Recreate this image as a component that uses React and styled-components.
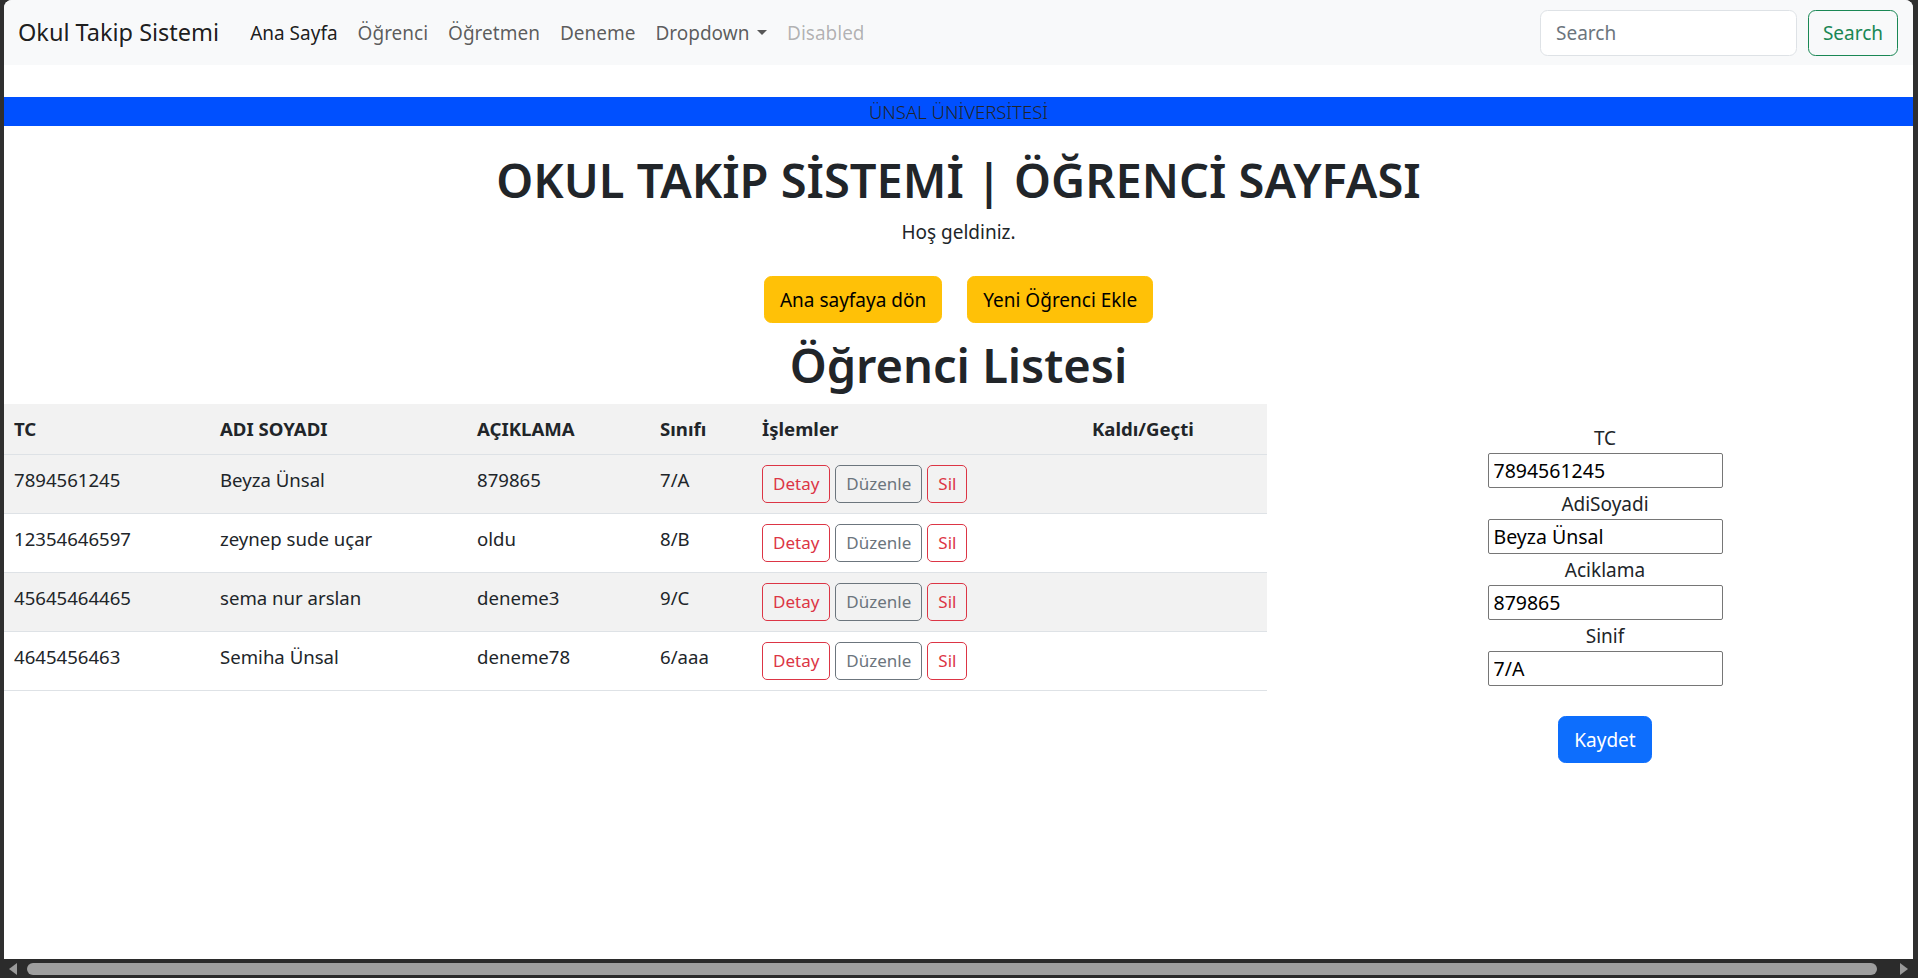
import React from "react";
import styled, { createGlobalStyle } from "styled-components";

const FONT = `"Noto Sans", "Open Sans", sans-serif`;

const GlobalStyle = createGlobalStyle`
  html, body {
    margin: 0;
    padding: 0;
    background: #2f2f2f;
  }
  body {
    font-family: ${FONT};
    color: #212529;
  }
  * {
    box-sizing: border-box;
  }
`;

const students = [
  { tc: "7894561245", name: "Beyza Ünsal", note: "879865", sinif: "7/A" },
  { tc: "12354646597", name: "zeynep sude uçar", note: "oldu", sinif: "8/B" },
  { tc: "45645464465", name: "sema nur arslan", note: "deneme3", sinif: "9/C" },
  { tc: "4645456463", name: "Semiha Ünsal", note: "deneme78", sinif: "6/aaa" },
];

const columns = [
  { title: "TC", width: 206 },
  { title: "ADI SOYADI", width: 257 },
  { title: "AÇIKLAMA", width: 183 },
  { title: "Sınıfı", width: 102 },
  { title: "İşlemler", width: 330 },
  { title: "Kaldı/Geçti", width: 185 },
];

const App = () => {
  const selected = students[0];

  return (
    <>
      <GlobalStyle />
      <Frame>
        <Viewport>
          <Nav>
            <Brand href="#">Okul Takip Sistemi</Brand>
            <NavList>
              <li>
                <NavLink $state="active" href="#">Ana Sayfa</NavLink>
              </li>
              <li>
                <NavLink href="#">Öğrenci</NavLink>
              </li>
              <li>
                <NavLink href="#">Öğretmen</NavLink>
              </li>
              <li>
                <NavLink href="#">Deneme</NavLink>
              </li>
              <li>
                <NavLink href="#">
                  Dropdown
                  <Caret />
                </NavLink>
              </li>
              <li>
                <NavLink $state="disabled">Disabled</NavLink>
              </li>
            </NavList>
            <SearchForm onSubmit={(e) => e.preventDefault()}>
              <SearchInput type="search" placeholder="Search" />
              <SearchButton type="submit">Search</SearchButton>
            </SearchForm>
          </Nav>

          <Banner>ÜNSAL ÜNİVERSİTESİ</Banner>

          <Title>OKUL TAKİP SİSTEMİ | ÖĞRENCİ SAYFASI</Title>
          <Welcome>Hoş geldiniz.</Welcome>
          <ActionRow>
            <WarningButton>Ana sayfaya dön</WarningButton>
            <WarningButton>Yeni Öğrenci Ekle</WarningButton>
          </ActionRow>
          <SubTitle>Öğrenci Listesi</SubTitle>

          <Content>
            <Table>
              <colgroup>
                {columns.map((c) => (
                  <col key={c.title} style={{ width: c.width }} />
                ))}
              </colgroup>
              <thead>
                <tr>
                  {columns.map((c) => (
                    <Th key={c.title}>{c.title}</Th>
                  ))}
                </tr>
              </thead>
              <tbody>
                {students.map((s, i) => (
                  <Row key={s.tc} $striped={i % 2 === 0}>
                    <Td>{s.tc}</Td>
                    <Td>{s.name}</Td>
                    <Td>{s.note}</Td>
                    <Td>{s.sinif}</Td>
                    <Td>
                      <ButtonGroup>
                        <SmallButton $color="#dc3545">Detay</SmallButton>
                        <SmallButton $color="#6c757d">Düzenle</SmallButton>
                        <SmallButton $color="#dc3545">Sil</SmallButton>
                      </ButtonGroup>
                    </Td>
                    <Td />
                  </Row>
                ))}
              </tbody>
            </Table>

            <FormColumn>
              <FieldLabel>TC</FieldLabel>
              <FieldInput defaultValue={selected.tc} />
              <FieldLabel>AdiSoyadi</FieldLabel>
              <FieldInput defaultValue={selected.name} />
              <FieldLabel>Aciklama</FieldLabel>
              <FieldInput defaultValue={selected.note} />
              <FieldLabel>Sinif</FieldLabel>
              <FieldInput defaultValue={selected.sinif} />
              <SaveButton>Kaydet</SaveButton>
            </FormColumn>
          </Content>
        </Viewport>

        <ScrollBar>
          <ScrollArrow $dir="left" />
          <ScrollThumb />
          <ScrollArrow $dir="right" />
        </ScrollBar>
      </Frame>
    </>
  );
};

export default App;

const Frame = styled.div`
  height: 978px;
  display: flex;
  flex-direction: column;
  overflow: hidden;
`;

const Viewport = styled.div`
  flex: 1;
  margin: 0 5px 0 4px;
  background: #fff;
  border-radius: 8px 8px 0 0;
  overflow: hidden;
`;

const Nav = styled.nav`
  height: 65px;
  background: #f8f9fa;
  display: flex;
  align-items: center;
  padding: 0 15px 0 14px;
`;

const Brand = styled.a`
  font-size: 23.5px;
  line-height: 1.5;
  color: rgba(0, 0, 0, 0.9);
  margin-right: 21px;
  text-decoration: none;
`;

const NavList = styled.ul`
  flex: 1;
  display: flex;
  list-style: none;
  margin: 0;
  padding: 0;
`;

const NavLink = styled.a`
  display: block;
  padding: 10px;
  font-size: 19px;
  line-height: 30px;
  text-decoration: none;
  color: ${(p) =>
    p.$state === "active"
      ? "rgba(0, 0, 0, 0.9)"
      : p.$state === "disabled"
      ? "rgba(0, 0, 0, 0.3)"
      : "rgba(0, 0, 0, 0.65)"};
`;

const Caret = styled.span`
  display: inline-block;
  margin-left: 0.4em;
  vertical-align: 0.255em;
  border-top: 0.3em solid;
  border-left: 0.3em solid transparent;
  border-right: 0.3em solid transparent;
`;

const SearchForm = styled.form`
  display: flex;
  gap: 11px;
`;

const SearchInput = styled.input`
  width: 257px;
  height: 46px;
  padding: 7px 15px;
  font: 19px ${FONT};
  color: #212529;
  background: #fff;
  border: 1px solid #dee2e6;
  border-radius: 7.5px;
  outline: none;

  &::placeholder {
    color: #6c757d;
  }
`;

const SearchButton = styled.button`
  height: 46px;
  width: 90px;
  padding: 0;
  font: 19px ${FONT};
  color: #198754;
  background: transparent;
  border: 1px solid #198754;
  border-radius: 7.5px;
`;

const Banner = styled.div`
  margin-top: 32px;
  height: 29px;
  line-height: 29px;
  background: #0050ff;
  text-align: center;
  font-size: 18.5px;
  font-weight: 300;
  color: #212529;
`;

const Title = styled.h1`
  margin: 24px 0 7px;
  font-size: 47px;
  line-height: 60px;
  font-weight: 600;
  text-align: center;
`;

const SubTitle = styled(Title)`
  margin: 12px 0 9px;
`;

const Welcome = styled.p`
  margin: 0;
  font-size: 19px;
  line-height: 30px;
  text-align: center;
`;

const ActionRow = styled.div`
  display: flex;
  justify-content: center;
  gap: 25px;
  margin-top: 29px;
`;

const WarningButton = styled.button`
  padding: 7.5px 15px;
  font: 19px/30px ${FONT};
  color: #000;
  background: #ffc107;
  border: 1px solid #ffc107;
  border-radius: 7.5px;
`;

const Content = styled.div`
  display: grid;
  grid-template-columns: 1263px 1fr;
  align-items: start;
`;

const Table = styled.table`
  width: 1263px;
  table-layout: fixed;
  border-collapse: collapse;
  font-size: 18.6px;
  line-height: 30px;
`;

const Th = styled.th`
  padding: 10px;
  text-align: left;
  font-weight: 700;
  background: #f2f2f2;
  border-bottom: 1px solid #dee2e6;
`;

const Row = styled.tr`
  background: ${(p) => (p.$striped ? "#f2f2f2" : "#fff")};
`;

const Td = styled.td`
  padding: 10px;
  vertical-align: top;
  border-bottom: 1px solid #dee2e6;
`;

const ButtonGroup = styled.div`
  display: flex;
  gap: 5px;
`;

const SmallButton = styled.button`
  padding: 5px 10px;
  font: 17px/26px ${FONT};
  color: ${(p) => p.$color};
  background: transparent;
  border: 1px solid ${(p) => p.$color};
  border-radius: 5px;
`;

const FormColumn = styled.div`
  padding: 19px 0 0 30px;
  display: flex;
  flex-direction: column;
  align-items: center;
`;

const FieldLabel = styled.label`
  display: block;
  font-size: 19px;
  line-height: 30px;
`;

const FieldInput = styled.input`
  width: 235px;
  height: 35px;
  margin-bottom: 1px;
  padding: 1px 5px;
  font: 19.5px ${FONT};
  color: #000;
  background: #fff;
  border: 1px solid #767676;
  border-radius: 2px;
`;

const SaveButton = styled.button`
  margin-top: 29px;
  padding: 7.5px 15px;
  font: 19px/30px ${FONT};
  color: #fff;
  background: #0d6efd;
  border: 1px solid #0d6efd;
  border-radius: 7.5px;
`;

const ScrollBar = styled.div`
  height: 19px;
  display: flex;
  align-items: center;
  padding: 1px 10px 0 9px;
  background: #2b2b2b;
`;

const ScrollArrow = styled.span`
  width: 0;
  height: 0;
  border-top: 6px solid transparent;
  border-bottom: 6px solid transparent;
  ${(p) =>
    p.$dir === "left"
      ? "border-right: 8px solid #9a9a9a; margin-right: 10px;"
      : "border-left: 8px solid #9a9a9a; margin-left: 23px;"}
`;

const ScrollThumb = styled.div`
  flex: 1;
  height: 12px;
  background: #9f9f9f;
  border-radius: 6px;
`;
